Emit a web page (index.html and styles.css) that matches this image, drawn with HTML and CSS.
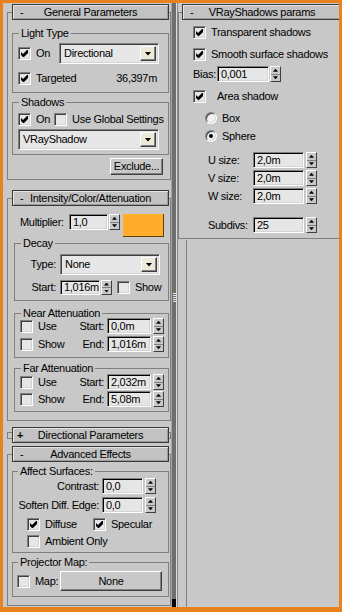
FILE: index.html
```html
<!DOCTYPE html>
<html lang="en">
<head>
<meta charset="utf-8">
<title>Light parameters</title>
<link rel="stylesheet" href="styles.css">
</head>
<body>
<div class="screen">
  <div class="col col-left">
    <fieldset class="rollout r-gen">
      <legend class="rhead"><div class="rtitle"><span class="sign">-</span><span class="rname">General Parameters</span></div></legend>
      <fieldset class="group g-light">
        <legend>Light Type</legend>
        <div class="row r-lt1">
          <label class="chk"><span class="cb"><svg viewBox="0 0 7 7"><path d="M0 2L2 4L6 0H7V3L3 7H2L0 5Z"/></svg></span>On</label>
          <div class="combo c-dir"><span class="ctext">Directional</span><span class="cbtn"></span></div>
        </div>
        <div class="row r-lt2">
          <label class="chk"><span class="cb"><svg viewBox="0 0 7 7"><path d="M0 2L2 4L6 0H7V3L3 7H2L0 5Z"/></svg></span>Targeted</label>
          <span class="value">36,397m</span>
        </div>
      </fieldset>
      <fieldset class="group g-shadows">
        <legend>Shadows</legend>
        <div class="row r-sh1">
          <label class="chk"><span class="cb"><svg viewBox="0 0 7 7"><path d="M0 2L2 4L6 0H7V3L3 7H2L0 5Z"/></svg></span>On</label>
          <label class="chk c-global"><span class="cb"></span>Use Global Settings</label>
        </div>
        <div class="combo c-shadow"><span class="ctext">VRayShadow</span><span class="cbtn"></span></div>
      </fieldset>
      <div class="row r-excl"><span class="btn b-excl">Exclude...</span></div>
    </fieldset>

    <fieldset class="rollout r-int">
      <legend class="rhead"><div class="rtitle"><span class="sign">-</span><span class="rname">Intensity/Color/Attenuation</span></div></legend>
      <div class="row r-mult">
        <span class="lbl l-mult">Multiplier:</span>
        <div class="spin"><span class="field f-mult">1,0</span><span class="arrows"><i></i><i></i></span></div>
        <span class="swatch"></span>
      </div>
      <fieldset class="group g-decay">
        <legend>Decay</legend>
        <div class="row r-type">
          <span class="lbl l-decay">Type:</span>
          <div class="combo c-none"><span class="ctext">None</span><span class="cbtn"></span></div>
        </div>
        <div class="row r-start">
          <span class="lbl l-decay">Start:</span>
          <div class="spin s-start"><span class="field f-start">1,016m</span><span class="arrows"><i></i><i></i></span></div>
          <label class="chk c-show"><span class="cb"></span>Show</label>
        </div>
      </fieldset>
      <fieldset class="group g-near">
        <legend>Near Attenuation</legend>
        <div class="row r-att">
          <label class="chk c-att"><span class="cb"></span>Use</label>
          <span class="lbl l-att">Start:</span>
          <div class="spin"><span class="field f-att">0,0m</span><span class="arrows a-att"><i></i><i></i></span></div>
        </div>
        <div class="row r-att r-att2">
          <label class="chk c-att"><span class="cb"></span>Show</label>
          <span class="lbl l-att">End:</span>
          <div class="spin"><span class="field f-att">1,016m</span><span class="arrows a-att"><i></i><i></i></span></div>
        </div>
      </fieldset>
      <fieldset class="group g-far">
        <legend>Far Attenuation</legend>
        <div class="row r-att">
          <label class="chk c-att"><span class="cb"></span>Use</label>
          <span class="lbl l-att">Start:</span>
          <div class="spin"><span class="field f-att">2,032m</span><span class="arrows a-att"><i></i><i></i></span></div>
        </div>
        <div class="row r-att r-att3">
          <label class="chk c-att"><span class="cb"></span>Show</label>
          <span class="lbl l-att">End:</span>
          <div class="spin"><span class="field f-att">5,08m</span><span class="arrows a-att"><i></i><i></i></span></div>
        </div>
      </fieldset>
    </fieldset>

    <div class="collapsed">
      <span class="brk brk-l"></span>
      <div class="rtitle"><span class="sign plus">+</span><span class="rname">Directional Parameters</span></div>
      <span class="brk brk-r"></span>
    </div>

    <fieldset class="rollout r-adv">
      <legend class="rhead"><div class="rtitle"><span class="sign">-</span><span class="rname">Advanced Effects</span></div></legend>
      <fieldset class="group g-affect">
        <legend>Affect Surfaces:</legend>
        <div class="row r-ct">
          <span class="lbl l-aff">Contrast:</span>
          <div class="spin"><span class="field f-aff">0,0</span><span class="arrows a-aff"><i></i><i></i></span></div>
        </div>
        <div class="row r-ct r-soft">
          <span class="lbl l-aff">Soften Diff. Edge:</span>
          <div class="spin"><span class="field f-aff">0,0</span><span class="arrows a-aff"><i></i><i></i></span></div>
        </div>
        <div class="row r-diff">
          <label class="chk c-diffuse"><span class="cb"><svg viewBox="0 0 7 7"><path d="M0 2L2 4L6 0H7V3L3 7H2L0 5Z"/></svg></span>Diffuse</label>
          <label class="chk c-spec"><span class="cb"><svg viewBox="0 0 7 7"><path d="M0 2L2 4L6 0H7V3L3 7H2L0 5Z"/></svg></span>Specular</label>
        </div>
        <div class="row r-amb">
          <label class="chk"><span class="cb"></span>Ambient Only</label>
        </div>
      </fieldset>
      <fieldset class="group g-proj">
        <legend>Projector Map:</legend>
        <div class="row r-map">
          <label class="chk c-map"><span class="cb"></span>Map:</label>
          <span class="btn b-none">None</span>
        </div>
      </fieldset>
    </fieldset>
  </div>

  <div class="divider"><span class="grip"></span><span class="cap"></span></div>

  <div class="col col-right">
    <fieldset class="rollout r-vray">
      <legend class="rhead"><div class="rtitle"><span class="sign">-</span><span class="rname">VRayShadows params</span></div></legend>
      <div class="row v-row v-trans">
        <label class="chk"><span class="cb"><svg viewBox="0 0 7 7"><path d="M0 2L2 4L6 0H7V3L3 7H2L0 5Z"/></svg></span>Transparent shadows</label>
      </div>
      <div class="row v-row v-smooth">
        <label class="chk"><span class="cb"><svg viewBox="0 0 7 7"><path d="M0 2L2 4L6 0H7V3L3 7H2L0 5Z"/></svg></span>Smooth surface shadows</label>
      </div>
      <div class="row v-bias">
        <span class="lbl l-bias">Bias:</span>
        <div class="spin"><span class="field f-bias">0,001</span><span class="arrows"><i></i><i></i></span></div>
      </div>
      <div class="row v-row v-area">
        <label class="chk c-area"><span class="cb"><svg viewBox="0 0 7 7"><path d="M0 2L2 4L6 0H7V3L3 7H2L0 5Z"/></svg></span>Area shadow</label>
      </div>
      <div class="row v-radio v-box">
        <label class="chk"><span class="radio"></span>Box</label>
      </div>
      <div class="row v-radio v-sphere">
        <label class="chk"><span class="radio sel"></span>Sphere</label>
      </div>
      <div class="row v-size v-u">
        <span class="lbl l-size">U size:</span>
        <div class="spin"><span class="field f-size">2,0m</span><span class="arrows a-size"><i></i><i></i></span></div>
      </div>
      <div class="row v-size v-v">
        <span class="lbl l-size">V size:</span>
        <div class="spin"><span class="field f-size">2,0m</span><span class="arrows a-size"><i></i><i></i></span></div>
      </div>
      <div class="row v-size v-w">
        <span class="lbl l-size">W size:</span>
        <div class="spin"><span class="field f-size">2,0m</span><span class="arrows a-size"><i></i><i></i></span></div>
      </div>
      <div class="row v-size v-subdivs">
        <span class="lbl l-size">Subdivs:</span>
        <div class="spin"><span class="field f-size">25</span><span class="arrows a-size"><i></i><i></i></span></div>
      </div>
    </fieldset>
    <div class="filler"></div>
  </div>
</div>
</body>
</html>
```

FILE: styles.css
```css
* { box-sizing: border-box; }
html, body { margin: 0; padding: 0; background: #c8c8c8; }
body {
  font-family: "Liberation Sans", Arial, sans-serif;
  font-size: 11px;
  letter-spacing: -0.3px;
  line-height: 13px;
  color: #000;
}
.screen {
  width: 342px;
  height: 612px;
  display: flex;
  overflow: hidden;
  background: #c8c8c8;
  border: 3px solid #e8821e;
  border-bottom-width: 5px;
}
.col { display: flex; flex-direction: column; align-items: flex-start; }
.col-left { width: 168px; flex: none; padding: 1px 0 0 4px; }
.col-right {
  flex: 1;
  min-width: 0;
  overflow: hidden;
  padding-top: 1px;
  border-left: 1px solid #8a8a8a;
}

fieldset { margin: 0; min-inline-size: 0; }
legend { padding: 0; margin: 0; }

/* rollouts */
.rollout {
  width: 164px;
  border: 1px solid #808080;
  padding: 0 1px 4px 4px;
}
.rhead { width: 100%; }
.rtitle {
  width: 100%;
  height: 16px;
  display: grid;
  grid-template-columns: 1fr auto 1fr;
  align-items: center;
  border: 1px solid #3a3a3a;
  background: #c2c2c2;
  box-shadow: inset 1px 1px #e4e4e4, inset -1px -1px #9a9a9a;
  line-height: 14px;
  white-space: nowrap;
}
.sign { padding-left: 7px; }
.sign.plus { padding-left: 4px; font-weight: bold; }

.r-int { margin-top: 10px; padding-bottom: 8px; }
.r-adv { margin-top: 3px; padding-bottom: 8px; }

.collapsed { display: flex; align-items: center; margin-top: 6px; width: 164px; }
.collapsed .rtitle { width: 157px; flex: none; }
.brk { height: 7px; border: 1px solid #808080; }
.brk-l { width: 5px; border-right: 0; }
.brk-r { width: 2px; border-left: 0; }

/* groups */
.group { border: 1px solid #808080; padding: 0 0 0 5px; }
.group > legend { line-height: 10px; height: 10px; padding: 0 2px; margin-left: 1px; white-space: nowrap; }

.row { display: flex; align-items: center; }
.chk { display: flex; align-items: center; gap: 5px; white-space: nowrap; }
.lbl { display: flex; justify-content: flex-end; white-space: nowrap; }

/* checkbox */
.cb {
  width: 13px;
  height: 13px;
  flex: none;
  display: flex;
  align-items: center;
  justify-content: center;
  background: #e6e6e6;
  border: 1px solid;
  border-color: #808080 #fff #fff #808080;
  box-shadow: inset 1px 1px #404040, inset -1px -1px #d4d4d4;
}
.cb svg { width: 7px; height: 7px; fill: #000; }

/* radio */
.radio {
  width: 12px;
  height: 12px;
  flex: none;
  border-radius: 50%;
  background: #f2f2f2;
  border: 1px solid;
  border-color: #808080 #fff #fff #808080;
  box-shadow: inset 1px 1px #404040, inset -1px -1px #d4d4d4;
  display: flex;
  align-items: center;
  justify-content: center;
}
.radio.sel::after { content: ""; width: 4px; height: 4px; border-radius: 50%; background: #000; }

/* combo box */
.combo {
  display: flex;
  align-items: center;
  justify-content: space-between;
  background: #e6e6e6;
  border: 1px solid;
  border-color: #808080 #fff #fff #808080;
  box-shadow: inset 1px 1px #404040, inset -1px -1px #d4d4d4;
  padding: 2px;
  height: 21px;
}
.ctext { padding-left: 2px; }
.cbtn {
  width: 16px;
  align-self: stretch;
  background: #ece9d8;
  border: 1px solid;
  border-color: #fff #404040 #404040 #fff;
  box-shadow: inset -1px -1px #808080;
  display: flex;
  align-items: center;
  justify-content: center;
}
.cbtn::before {
  content: "";
  width: 7px;
  height: 4px;
  background: #000;
  clip-path: polygon(0 0, 100% 0, 50% 100%);
}

/* button */
.btn {
  display: flex;
  align-items: center;
  justify-content: center;
  background: #c8c8c8;
  border: 1px solid;
  border-color: #fff #404040 #404040 #fff;
  box-shadow: inset -1px -1px #808080;
  white-space: nowrap;
}

/* spinner */
.spin { display: flex; height: 16px; }
.field {
  display: flex;
  align-items: center;
  background: #e6e6e6;
  border: 1px solid;
  border-color: #808080 #fff #fff #808080;
  box-shadow: inset 1px 1px #000, inset -1px -1px #d4d4d4;
  padding-left: 3px;
  overflow: hidden;
  white-space: nowrap;
}
.arrows {
  width: 11px;
  margin-left: 1px;
  display: flex;
  flex-direction: column;
  border: 1px solid;
  border-color: #fff #404040 #404040 #fff;
  background: #c8c8c8;
}
.arrows i { flex: 1; display: flex; align-items: center; justify-content: center; }
.arrows i + i { border-top: 1px solid #808080; }
.arrows i:first-child::before {
  content: ""; width: 5px; height: 3px; background: #000;
  clip-path: polygon(50% 0, 100% 100%, 0 100%);
}
.arrows i:last-child::before {
  content: ""; width: 5px; height: 3px; background: #000;
  clip-path: polygon(0 0, 100% 0, 50% 100%);
}

/* General Parameters */
.g-light { margin-top: 8px; padding-top: 5px; padding-bottom: 7px; }
.r-lt1 { height: 21px; }
.c-dir { width: 100px; margin-left: auto; margin-right: 9px; }
.r-lt2 { height: 13px; margin-top: 8px; }
.value { margin-left: auto; margin-right: 11px; }
.g-shadows { margin-top: 4px; padding-top: 6px; padding-bottom: 4px; }
.r-sh1 { height: 13px; }
.c-global { margin-left: 4px; }
.c-shadow { width: 141px; margin-top: 3px; }
.r-excl { margin-top: 3px; justify-content: flex-end; padding-right: 6px; }
.b-excl { width: 53px; height: 17px; }

/* Intensity */
.r-mult { margin-top: 8px; padding-left: 8px; align-items: flex-start; height: 23px; }
.l-mult { width: 49px; justify-content: flex-start; line-height: 16px; }
.f-mult { width: 39px; }
.swatch {
  width: 41px;
  height: 23px;
  margin-left: 3px;
  background: #ffad2a;
  border-right: 1px solid #5a4010;
  border-bottom: 1px solid #5a4010;
}
.g-decay { margin-left: 2px; width: 155px; margin-top: 1px; padding-top: 6px; padding-bottom: 5px; }
.r-type { height: 21px; }
.l-decay { width: 38px; padding-right: 2px; }
.c-none { width: 100px; margin-left: 2px; }
.r-start { margin-top: 5px; height: 15px; }
.s-start { height: 15px; margin-left: 2px; }
.f-start { width: 40px; }
.c-show { margin-left: 5px; }

.g-near { margin-left: 2px; width: 155px; margin-top: 7px; padding-top: 0; padding-bottom: 5px; }
.g-far { margin-left: 2px; width: 155px; margin-top: 5px; padding-top: 1px; padding-bottom: 4px; }
.r-att { height: 16px; }
.r-att2 { margin-top: 2px; }
.r-att3 { margin-top: 1px; }
.c-att { width: 58px; }
.l-att { width: 28px; padding-right: 2px; }
.f-att { width: 44px; margin-left: 1px; }
.a-att { margin-left: 2px; }

/* Advanced */
.g-affect { margin-top: 4px; padding-top: 2px; padding-left: 4px; padding-bottom: 4px; }
.r-ct { height: 16px; }
.r-soft { margin-top: 3px; }
.l-aff { width: 83px; padding-right: 1px; }
.f-aff { width: 41px; margin-left: 2px; }
.a-aff { margin-left: 2px; }
.r-diff { margin-top: 5px; height: 13px; padding-left: 10px; }
.c-diffuse { width: 66px; }
.c-spec { margin-left: 0; }
.r-amb { margin-top: 4px; height: 13px; padding-left: 10px; }
.g-proj { margin-top: 4px; padding-top: 4px; padding-left: 4px; padding-bottom: 5px; }
.r-map { height: 20px; }
.c-map { width: 43px; }
.b-none { width: 102px; height: 20px; }

/* divider strip */
.divider {
  width: 6px;
  flex: none;
  display: flex;
  flex-direction: column;
  align-items: center;
  background: #6e6e6e;
  border-left: 1px solid #a4a4a4;
  border-right: 1px solid #dcdcdc;
}
.grip {
  width: 3px;
  height: 9px;
  margin-top: 290px;
  background: repeating-linear-gradient(#e4e4e4 0 1px, transparent 1px 2px);
}
.cap { margin-top: auto; width: 4px; height: 8px; background: #000; }

/* VRay */
.r-vray { width: 165px; padding: 0 0 5px 3px; }
.v-row { height: 13px; margin-left: 11px; }
.v-trans { margin-top: 6px; }
.v-smooth { margin-top: 9px; }
.v-bias { margin-top: 5px; height: 16px; margin-left: 11px; }
.l-bias { width: 24px; justify-content: flex-start; }
.f-bias { width: 52px; }
.v-area { margin-top: 8px; }
.c-area { gap: 11px; }
.v-radio { height: 12px; margin-left: 23px; }
.v-box { margin-top: 9px; }
.v-sphere { margin-top: 6px; }
.v-size { height: 16px; margin-left: 26px; margin-top: 2px; }
.v-u { margin-top: 10px; }
.v-subdivs { margin-top: 13px; }
.l-size { width: 45px; justify-content: flex-start; }
.f-size { width: 51px; }
.a-size { margin-left: 2px; }
.filler { flex: 1; width: 10px; margin-left: 8px; margin-top: 1px; border-left: 1px solid #808080; }
```
